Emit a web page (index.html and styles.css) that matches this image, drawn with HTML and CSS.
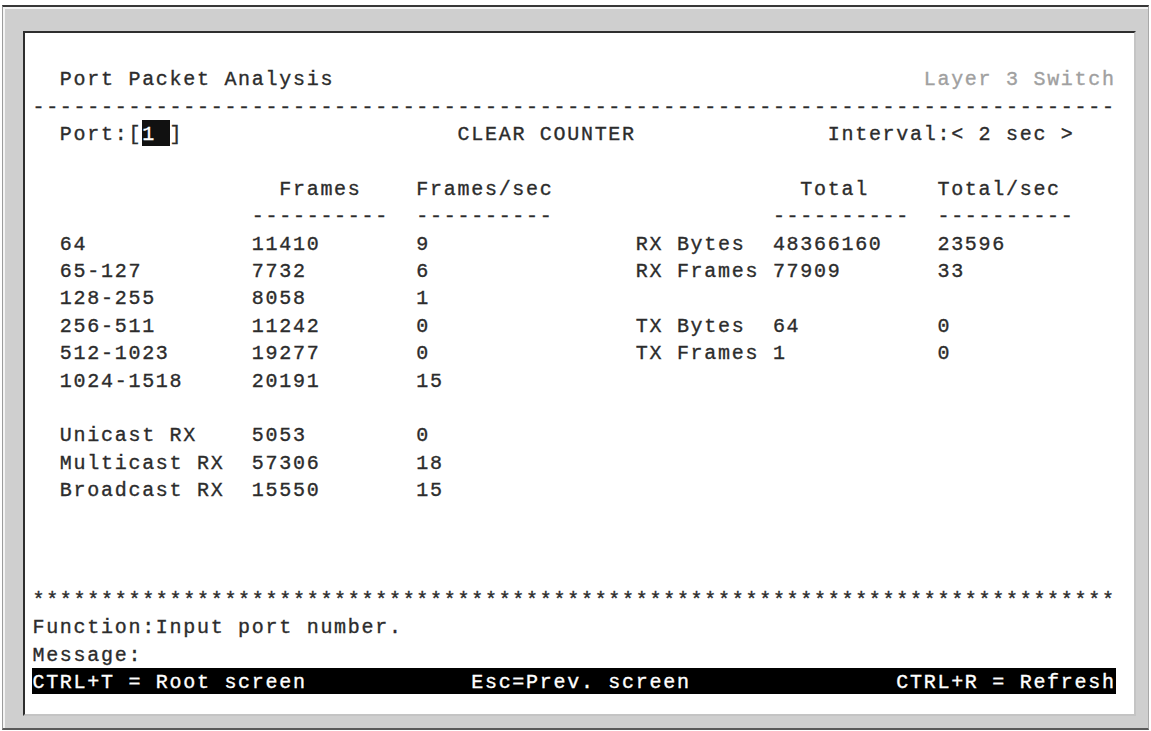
FILE: index.html
```html
<!DOCTYPE html>
<html lang="en">
<head>
    <meta charset="UTF-8">
    <meta name="viewport" content="width=device-width, initial-scale=1.0">
    <title>Port Packet Analysis</title>
    <link rel="stylesheet" href="styles.css">
</head>
<body>

    <div class="window">
        <div class="screen">
<pre class="term">  Port Packet Analysis                                           <span class="dim">Layer 3 Switch</span>
-------------------------------------------------------------------------------
  Port:[<span class="cur">1 </span>]                    CLEAR COUNTER              Interval:&lt; 2 sec &gt;

                  Frames    Frames/sec                  Total     Total/sec
                ----------  ----------                ----------  ----------
  64            11410       9               RX Bytes  48366160    23596
  65-127        7732        6               RX Frames 77909       33
  128-255       8058        1
  256-511       11242       0               TX Bytes  64          0
  512-1023      19277       0               TX Frames 1           0
  1024-1518     20191       15

  Unicast RX    5053        0
  Multicast RX  57306       18
  Broadcast RX  15550       15



*******************************************************************************
Function:Input port number.
Message:
<span class="bar">CTRL+T = Root screen            Esc=Prev. screen               CTRL+R = Refresh</span></pre>
        </div>
    </div>

</body>
</html>
```

FILE: styles.css
```css
* {
    box-sizing: border-box;
}

body {
    margin: 0;
    background: #fff;
}

.window {
    margin: 5px 2px 0;
    height: 725px;
    background: #cfcfcf;
    border-top: 2px solid #383838;
    border-left: 1px solid #9c9c9c;
    border-right: 1px solid #a8a8a8;
    border-bottom: 2px solid #5a5a5a;
    box-shadow: inset 2px 2px 0 #f4f4f4;
    padding: 24px 12px 12px 20px;
}

.screen {
    height: 685px;
    background: #fff;
    border: 2px solid;
    border-color: #2e2e2e #c4c4c4 #c4c4c4 #2e2e2e;
    overflow: hidden;
}

.term {
    margin: 0;
    padding: 33.2px 0 0 7.45px;
    font-family: "Liberation Mono", "Courier New", monospace;
    font-size: 20px;
    letter-spacing: 1.71px;
    line-height: 27.4px;
    color: #2c2c2c;
    -webkit-text-stroke: 0.35px;
}

.dim {
    color: #a0a0a0;
}

.cur {
    background: #111;
    color: #fff;
    padding-top: 3px;
}

.bar {
    background: #000;
    color: #fff;
    padding-top: 3px;
}
```
